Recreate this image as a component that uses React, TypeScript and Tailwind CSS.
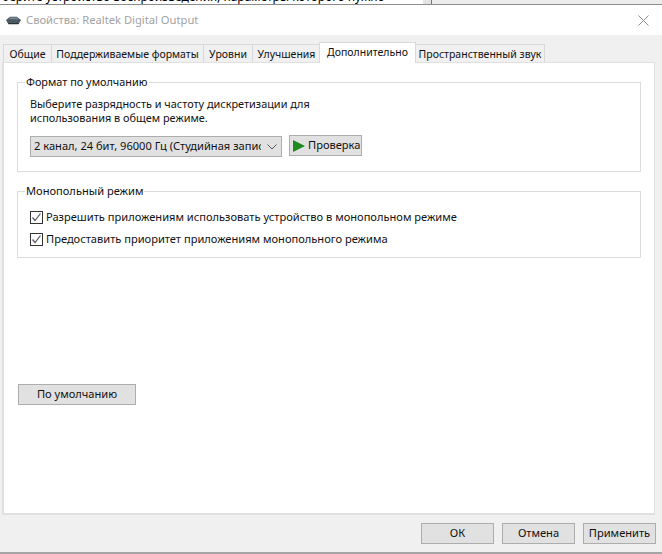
const FONT = "font-['Noto_Sans','Open_Sans',sans-serif]";

function Tab({ label, w, active }: { label: string; w: string; active?: boolean }) {
  return active ? (
    <div className={`${w} relative z-10 -mb-px h-[21px] -ml-px -mr-px flex items-start justify-center whitespace-nowrap border border-b-0 border-[#d9d9d9] bg-white pt-[1px] leading-[16px] text-[10.5px]`}>
      {label}
    </div>
  ) : (
    <div className={`${w} h-[18px] flex items-center justify-center whitespace-nowrap border border-b-0 border-r-0 last:border-r border-[#d9d9d9] bg-[#f0f0f0] leading-[16px] text-[10.5px]`}>
      {label}
    </div>
  );
}

function Check({ label, className }: { label: string; className?: string }) {
  return (
    <div className={`flex items-center ${className ?? ""}`}>
      <div className="w-[13px] h-[13px] border border-[#333333] bg-white flex items-center justify-center mr-[3px]">
        <svg width="11" height="11" viewBox="0 0 11 11" fill="none">
          <path d="M1.5 5.5 L4 8.5 L9.5 1.5" stroke="#555555" strokeWidth="1.2" />
        </svg>
      </div>
      <span className="leading-[16px]">{label}</span>
    </div>
  );
}

function Btn({ label, w, className }: { label: string; w: string; className?: string }) {
  return (
    <div className={`${w} h-[21px] flex items-center justify-center border border-[#adadad] bg-[#e1e1e1] ${className ?? ""}`}>
      {label}
    </div>
  );
}

export default function App() {
  return (
    <div className={`${FONT} w-[662px] h-[554px] bg-white flex flex-col overflow-hidden text-[11.1px] text-[#111111]`}>
      {/* background window */}
      <div className="h-[4px] flex overflow-hidden shrink-0">
        <div className="w-[423px] bg-white overflow-hidden relative">
          <div className="absolute left-0 top-[-11px] whitespace-nowrap text-[12px] leading-[16px] pl-[2px] text-black">
            берите устройство воспроизведения, параметры которого нужно
          </div>
        </div>
        <div className="w-[8px] bg-[#e4e4e4]" />
        <div className="w-px bg-[#777777]" />
        <div className="flex-1 bg-[#ececec]" />
      </div>
      <div className="h-px bg-[#8c8c8c] shrink-0" />

      {/* title bar */}
      <div className="h-[30px] bg-white flex items-center shrink-0 pl-[5px] pr-[13px]">
        <svg width="17" height="10" viewBox="0 0 20 12" className="mr-[4px]">
          <path d="M1 6 L6 2 H14 L19 6 L17 9.5 H3 Z" fill="#4b5a63" />
          <path d="M3 9.5 H17 L16 11 H4 Z" fill="#2a3338" />
          <path d="M6 3 H14 L16 5 H5 Z" fill="#7d8a91" />
        </svg>
        <span className="text-[11.2px] text-[#a2a2a2]">Свойства: Realtek Digital Output</span>
        <svg width="11" height="11" viewBox="0 0 11 11" className="ml-auto">
          <path d="M0.5 0.5 L10.5 10.5 M10.5 0.5 L0.5 10.5" stroke="#8f8f8f" strokeWidth="1" />
        </svg>
      </div>

      {/* body */}
      <div className="flex-1 bg-[#f0f0f0] flex flex-col pl-[2px] pr-[7px] border-b-2 border-[#a5a5a5] min-h-0">
        <div className="h-[9px] shrink-0" />
        <div className="flex items-end h-[18px] pl-[1px] shrink-0 relative z-10">
          <Tab label="Общие" w="w-[48px]" />
          <Tab label="Поддерживаемые форматы" w="w-[152px]" />
          <Tab label="Уровни" w="w-[49px]" />
          <Tab label="Улучшения" w="w-[68px]" />
          <Tab label="Дополнительно" w="w-[97px]" active />
          <Tab label="Пространственный звук" w="w-[130px]" />
        </div>

        <div className="h-[453px] shrink-0 bg-white border-2 border-[#e0e0e0] border-t-[1px] border-r-[1px] flex flex-col pl-[13px] pr-[13px]">
          <fieldset className="h-[97px] mt-[12px] border border-[#dcdcdc] pl-[12px] pr-[12px] shrink-0">
            <legend className="ml-[-5px] px-[1px] leading-[14px] text-[10.9px]">Формат по умолчанию</legend>
            <div className="mt-[8px] leading-[14px] text-[10.9px]">
              Выберите разрядность и частоту дискретизации для
              <br />
              использования в общем режиме.
            </div>
            <div className="flex items-center mt-[11px]">
              <div className="w-[252px] h-[21px] flex items-center border border-[#adadad] bg-[#e1e1e1] pl-[3px] pr-[4px]">
                <span className="whitespace-nowrap overflow-hidden flex-1">2 канал, 24 бит, 96000 Гц (Студийная запись)</span>
                <svg width="10" height="6" viewBox="0 0 10 6" className="ml-[6px] shrink-0">
                  <path d="M0.5 0.5 L5 5 L9.5 0.5" stroke="#555555" fill="none" />
                </svg>
              </div>
              <div className="ml-[7px] -mt-[2px] w-[73px] h-[21px] flex items-center border border-[#adadad] bg-[#e1e1e1] pl-[2px]">
                <svg width="14" height="14" viewBox="0 0 14 14" className="mr-[2px] shrink-0">
                  <path d="M1 1 L13 7 L1 13 Z" fill="#1f8a1f" />
                </svg>
                <span className="whitespace-nowrap">Проверка</span>
              </div>
            </div>
          </fieldset>

          <fieldset className="h-[74px] mt-[12px] border border-[#dcdcdc] pl-[12px] shrink-0">
            <legend className="ml-[-5px] px-[1px] leading-[14px]">Монопольный режим</legend>
            <Check label="Разрешить приложениям использовать устройство в монопольном режиме" className="mt-[11px]" />
            <Check label="Предоставить приоритет приложениям монопольного режима" className="mt-[6px]" />
          </fieldset>

          <Btn label="По умолчанию" w="w-[118px]" className="mt-[126px] ml-px" />
        </div>

        <div className="flex-1 flex justify-end items-start pt-[8px] gap-[8px] -mr-[1px]">
          <Btn label="ОК" w="w-[73px]" />
          <Btn label="Отмена" w="w-[73px]" />
          <Btn label="Применить" w="w-[73px]" />
        </div>
      </div>
    </div>
  );
}
